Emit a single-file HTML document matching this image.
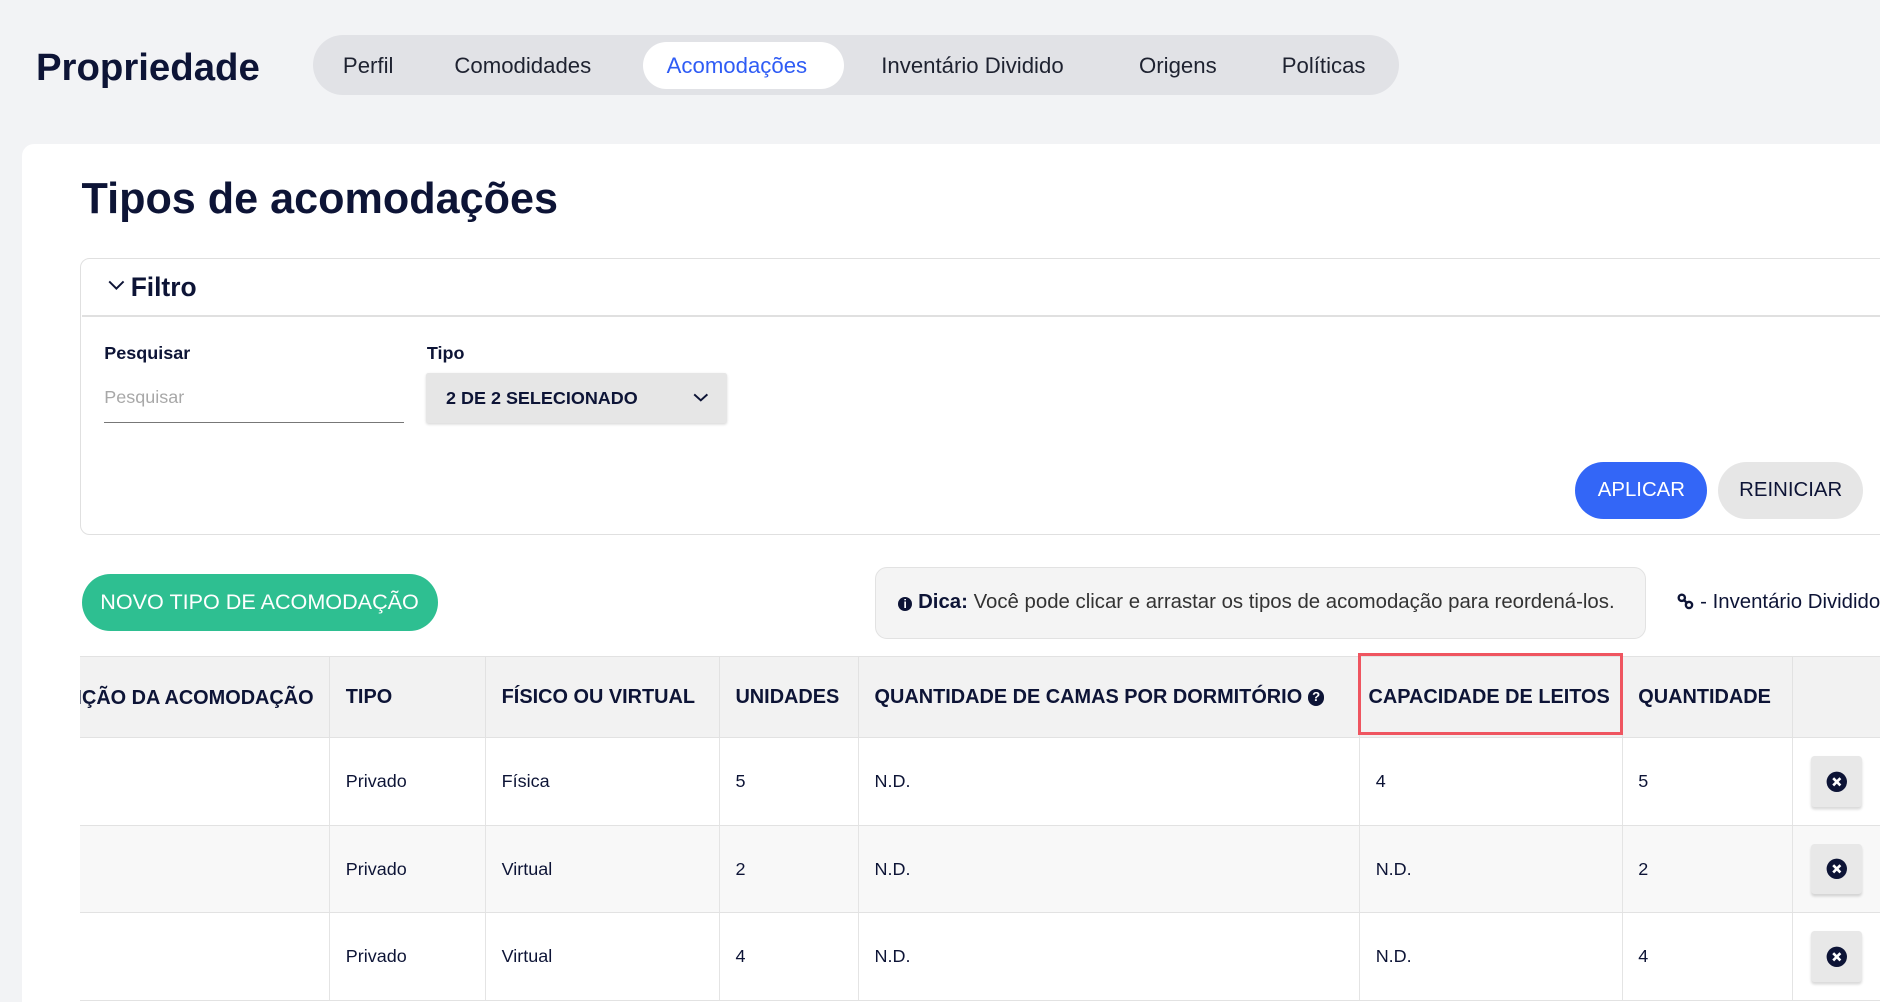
<!DOCTYPE html>
<html><head><meta charset="utf-8"><style>
*{box-sizing:border-box;margin:0;padding:0}
html,body{width:1880px;height:1002px;overflow:hidden;background:#f2f3f5}
#w{zoom:1.19898;width:1568px;height:836px;position:relative;font-family:"Liberation Sans",sans-serif;color:#0d1436}
.a{position:absolute;white-space:nowrap}
.tab{position:absolute;top:44px;font-size:18.5px;color:#1e2230}
th,td{text-align:left;font-weight:normal}
table{border-collapse:collapse;position:absolute;left:0;top:0;table-layout:fixed;width:1518px}
th{height:68px;background:#f2f2f2;font-size:16.6px;font-weight:bold;padding:0 13px;border-right:1px solid #e2e2e2;border-top:1px solid #e2e2e2;border-bottom:1px solid #e2e2e2;overflow:hidden;white-space:nowrap}
td{height:73px;font-size:15px;padding:0 13px;border-right:1px solid #e4e4e4;border-bottom:1px solid #e2e2e2;background:#fff;overflow:hidden;white-space:nowrap}
tr.g td{background:#f8f8f8}
.del{width:43px;height:42px;background:#e8e8e8;border-radius:3px;box-shadow:0 2px 2px rgba(0,0,0,.15);display:flex;align-items:center;justify-content:center;margin-left:2px}
</style></head><body><div id="w">
<div class="a" style="left:30px;top:38px;font-size:32px;font-weight:bold">Propriedade</div>
<div class="a" style="left:261px;top:29px;width:906px;height:50px;background:#e1e2e6;border-radius:25px"></div>
<div class="a" style="left:536px;top:35px;width:168px;height:39px;background:#fff;border-radius:20px"></div>
<div class="tab" style="left:286px">Perfil</div>
<div class="tab" style="left:379px">Comodidades</div>
<div class="tab" style="left:556px;color:#2f5cf5">Acomodações</div>
<div class="tab" style="left:735px">Inventário Dividido</div>
<div class="tab" style="left:950px">Origens</div>
<div class="tab" style="left:1069px">Políticas</div>

<div class="a" style="left:18px;top:120px;width:1560px;height:740px;background:#fff;border-radius:10px"></div>
<div class="a" style="left:68px;top:146px;font-size:36px;font-weight:bold">Tipos de acomodações</div>

<div class="a" style="left:67px;top:215px;width:1510px;height:231px;border:1px solid #e0e0e0;border-radius:8px"></div>
<div class="a" style="left:68px;top:263px;width:1500px;height:1px;background:#e0e0e0"></div>
<svg class="a" style="left:90px;top:233px" width="14" height="10" viewBox="0 0 14 10"><path d="M1 2l6 6 6-6" fill="none" stroke="#0d1436" stroke-width="1.6"/></svg>
<div class="a" style="left:109px;top:227px;font-size:22px;font-weight:bold">Filtro</div>
<div class="a" style="left:87px;top:286px;font-size:15px;font-weight:bold">Pesquisar</div>
<div class="a" style="left:87px;top:323px;font-size:15px;color:#a8a8a8">Pesquisar</div>
<div class="a" style="left:87px;top:352px;width:250px;height:1px;background:#777"></div>
<div class="a" style="left:356px;top:286px;font-size:15px;font-weight:bold">Tipo</div>
<div class="a" style="left:355px;top:311px;width:251px;height:42px;background:#e6e6e6;border-radius:2px;box-shadow:0 1px 2px rgba(0,0,0,.15)"></div>
<div class="a" style="left:372px;top:324px;font-size:15px;font-weight:bold">2 DE 2 SELECIONADO</div>
<svg class="a" style="left:578px;top:327px" width="13" height="9" viewBox="0 0 13 9"><path d="M1 2l5.5 5 5.5-5" fill="none" stroke="#0d1436" stroke-width="1.6"/></svg>
<div class="a" style="left:1314px;top:385px;width:110px;height:48px;background:#3366f7;border-radius:24px;color:#fff;font-size:17px;display:flex;align-items:center;justify-content:center">APLICAR</div>
<div class="a" style="left:1433px;top:385px;width:121px;height:48px;background:#e6e6e6;border-radius:24px;font-size:17px;display:flex;align-items:center;justify-content:center">REINICIAR</div>

<div class="a" style="left:68px;top:479px;width:297px;height:47px;background:#2ebf91;border-radius:24px;color:#fff;font-size:18px;display:flex;align-items:center;justify-content:center">NOVO TIPO DE ACOMODAÇÃO</div>
<div class="a" style="left:730px;top:473px;width:643px;height:60px;background:#f4f4f4;border:1px solid #e2e2e2;border-radius:10px"></div>
<div class="a" style="left:749px;top:493px;font-size:17px;color:#333"><span style="display:inline-block;width:12px;height:12px;border-radius:50%;background:#0d1436;color:#fff;font-size:10px;text-align:center;line-height:12px;font-weight:bold;vertical-align:0px">i</span> <b style="color:#0d1436">Dica:</b> Você pode clicar e arrastar os tipos de acomodação para reordená-los.</div>
<svg class="a" style="left:1399px;top:495px" width="14" height="14" viewBox="0 0 14 14"><circle cx="4" cy="4" r="2.6" fill="none" stroke="#0d1436" stroke-width="2"/><circle cx="10" cy="10" r="2.6" fill="none" stroke="#0d1436" stroke-width="2"/><path d="M5.5 5.5l3 3" stroke="#0d1436" stroke-width="2"/></svg>
<div class="a" style="left:1418px;top:493px;font-size:17px">- Inventário Dividido</div>

<div class="a" style="left:67px;top:547px;width:1501px;height:289px;overflow:hidden">
<table>
<colgroup><col style="width:208px"><col style="width:130px"><col style="width:195px"><col style="width:116px"><col style="width:418px"><col style="width:219px"><col style="width:142px"><col style="width:90px"></colgroup>
<tr><th style="position:relative;padding:0"><div style="position:absolute;right:13px;top:25px">DESCRIÇÃO DA ACOMODAÇÃO</div></th><th>TIPO</th><th>FÍSICO OU VIRTUAL</th><th>UNIDADES</th><th>QUANTIDADE DE CAMAS POR DORMITÓRIO <span style="display:inline-block;width:14px;height:14px;border-radius:50%;background:#0d1436;color:#fff;font-size:11px;text-align:center;line-height:14px;vertical-align:1px">?</span></th><th style="padding-left:7px">CAPACIDADE DE LEITOS</th><th>QUANTIDADE</th><th></th></tr>
<tr><td></td><td>Privado</td><td>Física</td><td>5</td><td>N.D.</td><td>4</td><td>5</td><td><div class="del"><svg width="18" height="18" viewBox="0 0 18 18"><circle cx="9" cy="9" r="8.5" fill="#0d1436"/><path d="M6 6l6 6M12 6l-6 6" stroke="#fff" stroke-width="2.2"/></svg></div></td></tr>
<tr class="g"><td></td><td>Privado</td><td>Virtual</td><td>2</td><td>N.D.</td><td>N.D.</td><td>2</td><td><div class="del"><svg width="18" height="18" viewBox="0 0 18 18"><circle cx="9" cy="9" r="8.5" fill="#0d1436"/><path d="M6 6l6 6M12 6l-6 6" stroke="#fff" stroke-width="2.2"/></svg></div></td></tr>
<tr><td></td><td>Privado</td><td>Virtual</td><td>4</td><td>N.D.</td><td>N.D.</td><td>4</td><td><div class="del"><svg width="18" height="18" viewBox="0 0 18 18"><circle cx="9" cy="9" r="8.5" fill="#0d1436"/><path d="M6 6l6 6M12 6l-6 6" stroke="#fff" stroke-width="2.2"/></svg></div></td></tr>
</table></div>
<div class="a" style="left:1133px;top:545px;width:221px;height:68px;border:3px solid #ef5560"></div>
</div></body></html>
